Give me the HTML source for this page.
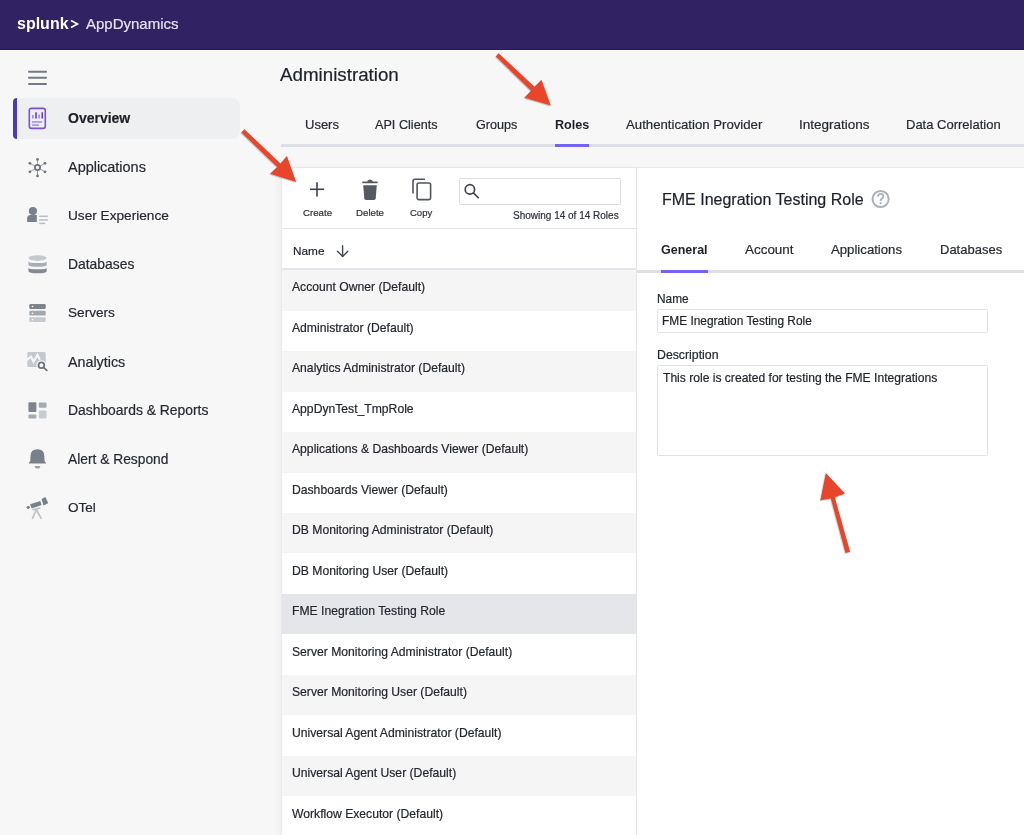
<!DOCTYPE html>
<html><head><meta charset="utf-8">
<style>
*{margin:0;padding:0;box-sizing:border-box}
html,body{width:1024px;height:835px;overflow:hidden;background:#f7f7f7;font-family:"Liberation Sans",sans-serif;position:relative}
.t{position:absolute;white-space:nowrap;line-height:1;will-change:transform;-webkit-text-stroke:0.2px currentColor}
.hdr{position:absolute;left:0;top:0;width:1024px;height:49.5px;background:#312263;border-bottom:1.5px solid #281a58}
.ovr{position:absolute;left:13px;top:97.8px;width:227px;height:41px;background:#eeeff1;border-radius:8px}
.ovbar{position:absolute;left:13px;top:97.8px;width:4.2px;height:41px;background:#4d3ab8;border-radius:8px 0 0 8px}
.side{color:#262a30;font-size:14.3px}
.tab{color:#262a30;font-size:13px}
.panelL{position:absolute;left:281px;top:167px;width:355.5px;height:668px;background:#fff;box-shadow:-3px 0 6px rgba(0,0,0,0.04);border-top:1px solid #e6e8eb;border-left:1px solid #e9eaed}
.panelR{position:absolute;left:636px;top:167px;width:388px;height:668px;background:#fff;border-left:1.2px solid #e3e5e9;border-top:1px solid #e6e8eb}
.row{position:absolute;left:282px;width:354px;height:40.45px}
.rt{color:#23272e;font-size:12.17px}
</style></head><body>
<div class="hdr"></div>
<div class="t" style="left:16.5px;top:15.7px;font-size:16px;font-weight:bold;color:#fff;-webkit-text-stroke:0">splunk</div>
<svg width="12" height="14" style="position:absolute;left:68px;top:17px" viewBox="68 17 12 14"><polyline points="71,20.6 77.4,24 71,27.4" fill="none" stroke="#fff" stroke-width="1.7"/></svg>
<div class="t" style="left:86.4px;top:16px;font-size:15px;color:#e6e2ef">AppDynamics</div>

<div class="ovr"></div><div class="ovbar"></div>
<div class="t side" style="left:68.2px;top:111px;font-weight:bold;font-size:14px;color:#1d2026">Overview</div>
<div class="t side" style="left:68.2px;top:160.3px;font-size:14.45px">Applications</div>
<div class="t side" style="left:68.2px;top:209.0px;font-size:13.65px">User Experience</div>
<div class="t side" style="left:68.2px;top:257.7px;font-size:13.9px">Databases</div>
<div class="t side" style="left:68.2px;top:306.4px;font-size:13.6px">Servers</div>
<div class="t side" style="left:68.2px;top:355.1px">Analytics</div>
<div class="t side" style="left:68.2px;top:403.8px;font-size:13.88px">Dashboards &amp; Reports</div>
<div class="t side" style="left:68.2px;top:452.5px;font-size:13.8px">Alert &amp; Respond</div>
<div class="t side" style="left:68.2px;top:501.2px;font-size:13.5px">OTel</div>

<div class="t" style="left:280.3px;top:65.8px;font-size:18.75px;color:#1d2129">Administration</div>
<div class="t tab" style="left:304.6px;top:117.7px">Users</div>
<div class="t tab" style="left:375.3px;top:119px;font-size:12.65px">API Clients</div>
<div class="t tab" style="left:476.1px;top:119px;font-size:12.6px">Groups</div>
<div class="t tab" style="left:555px;top:119px;font-size:12.63px;font-weight:bold;color:#1d2026;-webkit-text-stroke:0">Roles</div>
<div class="t tab" style="left:625.6px;top:117.7px;font-size:13.2px">Authentication Provider</div>
<div class="t tab" style="left:799.3px;top:117.7px;font-size:13.5px">Integrations</div>
<div class="t tab" style="left:905.8px;top:117.7px">Data Correlation</div>
<div style="position:absolute;left:281px;top:144px;width:743px;height:3px;background:#dcdfe3"></div>
<div style="position:absolute;left:555px;top:144px;width:34px;height:3px;background:#7264f0"></div>

<div class="panelL"></div>
<div class="panelR"></div>

<!-- list panel content -->
<div style="position:absolute;left:459px;top:178px;width:162px;height:26.7px;border:1px solid #dcdee2;border-radius:1.5px;background:#fff"></div>
<div class="t" style="left:302.6px;top:207.5px;font-size:9.7px;color:#2d3139">Create</div>
<div class="t" style="left:356.3px;top:207.5px;font-size:9.7px;color:#2d3139">Delete</div>
<div class="t" style="left:409.8px;top:207.5px;font-size:9.5px;color:#2d3139">Copy</div>
<div class="t" style="left:512.7px;top:211px;font-size:10px;color:#2d3139">Showing 14 of 14 Roles</div>
<div style="position:absolute;left:281.5px;top:228px;width:354.5px;height:1px;background:#e3e5e8"></div>
<div class="t" style="left:292.5px;top:245.8px;font-size:11.8px;color:#23272e">Name</div>
<div style="position:absolute;left:281.5px;top:268.4px;width:354.5px;height:2px;background:#e4e6e9"></div>
<div class="row" style="top:270.40px;background:#f5f5f5"></div>
<div class="t rt" style="left:292.2px;top:281.10px">Account Owner (Default)</div>
<div class="row" style="top:310.83px;background:#ffffff"></div>
<div class="t rt" style="left:292.2px;top:321.60px">Administrator (Default)</div>
<div class="row" style="top:351.26px;background:#f5f5f5"></div>
<div class="t rt" style="left:292.2px;top:362.10px">Analytics Administrator (Default)</div>
<div class="row" style="top:391.69px;background:#ffffff"></div>
<div class="t rt" style="left:292.2px;top:402.60px">AppDynTest_TmpRole</div>
<div class="row" style="top:432.12px;background:#f5f5f5"></div>
<div class="t rt" style="left:292.2px;top:443.10px">Applications &amp; Dashboards Viewer (Default)</div>
<div class="row" style="top:472.55px;background:#ffffff"></div>
<div class="t rt" style="left:292.2px;top:483.60px">Dashboards Viewer (Default)</div>
<div class="row" style="top:512.98px;background:#f5f5f5"></div>
<div class="t rt" style="left:292.2px;top:524.10px">DB Monitoring Administrator (Default)</div>
<div class="row" style="top:553.41px;background:#ffffff"></div>
<div class="t rt" style="left:292.2px;top:564.60px">DB Monitoring User (Default)</div>
<div class="row" style="top:593.84px;background:#e5e6e9"></div>
<div class="t rt" style="left:292.2px;top:605.10px">FME Inegration Testing Role</div>
<div class="row" style="top:634.27px;background:#ffffff"></div>
<div class="t rt" style="left:292.2px;top:645.60px">Server Monitoring Administrator (Default)</div>
<div class="row" style="top:674.70px;background:#f5f5f5"></div>
<div class="t rt" style="left:292.2px;top:686.10px">Server Monitoring User (Default)</div>
<div class="row" style="top:715.13px;background:#ffffff"></div>
<div class="t rt" style="left:292.2px;top:726.60px">Universal Agent Administrator (Default)</div>
<div class="row" style="top:755.56px;background:#f5f5f5"></div>
<div class="t rt" style="left:292.2px;top:767.10px">Universal Agent User (Default)</div>
<div class="row" style="top:795.99px;background:#ffffff"></div>
<div class="t rt" style="left:292.2px;top:807.60px">Workflow Executor (Default)</div>
<!-- right panel content -->
<div class="t" style="left:662.2px;top:191.6px;font-size:16px;color:#1d2129">FME Inegration Testing Role</div>
<div class="t tab" style="left:661.4px;top:244px;font-size:12.5px;font-weight:bold;color:#1d2026;-webkit-text-stroke:0">General</div>
<div class="t tab" style="left:745px;top:243.2px;font-size:13.45px">Account</div>
<div class="t tab" style="left:830.5px;top:243.2px;font-size:13.18px">Applications</div>
<div class="t tab" style="left:940px;top:243.2px">Databases</div>
<div style="position:absolute;left:637px;top:269.5px;width:387px;height:3px;background:#dcdfe3"></div>
<div style="position:absolute;left:661px;top:269.5px;width:47px;height:3px;background:#7264f0"></div>
<div class="t" style="left:657.2px;top:294px;font-size:11.85px;color:#23272e">Name</div>
<div style="position:absolute;left:657px;top:309px;width:330.5px;height:24px;border:1px solid #e0e2e6;border-radius:1.5px"></div>
<div class="t" style="left:662.4px;top:315.8px;font-size:11.9px;color:#1d2129">FME Inegration Testing Role</div>
<div class="t" style="left:657px;top:348.5px;font-size:12.3px;color:#23272e">Description</div>
<div style="position:absolute;left:657px;top:365px;width:330.5px;height:90.5px;border:1px solid #e0e2e6;border-radius:1.5px"></div>
<div class="t" style="left:662.7px;top:371.8px;font-size:12.1px;color:#1d2129">This role is created for testing the FME Integrations</div>


<svg width="1024" height="835" viewBox="0 0 1024 835" style="position:absolute;left:0;top:0">
<defs>
<filter id="sh" x="-20%" y="-20%" width="140%" height="140%"><feDropShadow dx="-0.6" dy="0.8" stdDeviation="0.7" flood-color="#2a4a4a" flood-opacity="0.35"/></filter>
</defs>
<!-- hamburger -->
<g stroke="#737a84" stroke-width="2" stroke-linecap="round">
<line x1="29" y1="71.7" x2="46" y2="71.7"/><line x1="29" y1="77.8" x2="46" y2="77.8"/><line x1="29" y1="83.9" x2="46" y2="83.9"/>
</g>
<!-- overview icon -->
<rect x="29.3" y="108.4" width="16" height="20" rx="2.2" fill="none" stroke="#7a4fdc" stroke-width="1.6"/>
<rect x="32" y="115" width="1.6" height="3.5" fill="#a688f0"/>
<rect x="35.2" y="112.3" width="1.6" height="6.2" fill="#6a3fd0"/>
<rect x="38.3" y="114.6" width="1.6" height="3.9" fill="#a688f0"/>
<rect x="41.4" y="112.3" width="1.6" height="6.2" fill="#6a3fd0"/>
<rect x="32" y="121.2" width="10.2" height="1.5" fill="#a688f0"/>
<rect x="32" y="124.4" width="7" height="1.5" fill="#a688f0"/>
<!-- applications icon -->
<g stroke="#9aa0a8" stroke-width="1">
<line x1="37.5" y1="167.5" x2="37.5" y2="159.4"/><line x1="37.5" y1="167.5" x2="37.5" y2="175.9"/>
<line x1="37.5" y1="167.5" x2="29.9" y2="163.3"/><line x1="37.5" y1="167.5" x2="45" y2="163.3"/>
<line x1="37.5" y1="167.5" x2="29.9" y2="171.8"/><line x1="37.5" y1="167.5" x2="45" y2="171.8"/>
</g>
<circle cx="37.5" cy="167.5" r="2.6" fill="#f7f7f7" stroke="#6f757e" stroke-width="1.8"/>
<g fill="#6f757e">
<circle cx="37.5" cy="159.4" r="1.4"/><circle cx="37.5" cy="175.9" r="1.4"/>
<circle cx="29.9" cy="163.3" r="1.4"/><circle cx="45" cy="163.3" r="1.4"/>
<circle cx="29.9" cy="171.8" r="1.4"/><circle cx="45" cy="171.8" r="1.4"/>
</g>
<!-- user experience icon -->
<circle cx="32.9" cy="211" r="4.1" fill="#7a818b"/>
<path d="M27.1 221.9 V218.5 Q27.1 215 30.5 215 H36.8 V221.9 Z" fill="#7a818b"/>
<g stroke="#b8bcc2" stroke-width="1.5">
<line x1="39.2" y1="216.3" x2="47.8" y2="216.3"/><line x1="39.2" y1="220" x2="47.8" y2="220"/><line x1="39.2" y1="223.4" x2="45.2" y2="223.4"/>
</g>
<!-- databases icon -->
<path d="M28.4 267.8 V271 Q28.4 273.3 37.5 273.3 Q46.7 273.3 46.7 271 V267.8 Q46.7 269.3 37.5 269.3 Q28.4 269.3 28.4 267.8 Z" fill="#858a92"/>
<path d="M28.4 261.4 V264.7 Q28.4 266.7 37.5 266.7 Q46.7 266.7 46.7 264.7 V261.4 Q46.7 263 37.5 263 Q28.4 263 28.4 261.4 Z" fill="#a9adb3"/>
<ellipse cx="37.5" cy="258.1" rx="9.15" ry="2.8" fill="#c5c8cc"/>
<!-- servers icon -->
<rect x="29.3" y="304.1" width="16.4" height="4.8" rx="1.2" fill="#7e848c"/>
<rect x="29.3" y="310.8" width="16.4" height="4.8" rx="1.2" fill="#a3a8ae"/>
<rect x="29.3" y="317.3" width="16.4" height="4.6" rx="1.2" fill="#c6c9cd"/>
<g fill="#fff"><circle cx="32.5" cy="306.5" r="0.8"/><circle cx="32.5" cy="313.2" r="0.8"/><circle cx="32.5" cy="319.6" r="0.8"/></g>
<!-- analytics icon -->
<rect x="27.3" y="352.1" width="18.4" height="14.8" rx="1.5" fill="#c5c8cd"/>
<polyline points="26.8,359.8 31,356.6 33.6,361.8 37.5,354.7 39.9,359.8" fill="none" stroke="#f7f7f7" stroke-width="2.1"/>
<circle cx="41.4" cy="365.2" r="5" fill="#f7f7f7"/>
<circle cx="41.4" cy="365.2" r="2.9" fill="none" stroke="#6f757e" stroke-width="1.8"/>
<line x1="43.5" y1="367.4" x2="46.8" y2="370.4" stroke="#6f757e" stroke-width="1.8" stroke-linecap="round"/>
<!-- dashboards icon -->
<rect x="28.4" y="402.2" width="8" height="9.9" rx="1" fill="#7e848c"/>
<rect x="38.8" y="402.4" width="7.7" height="5.4" rx="1" fill="#a5aab0"/>
<rect x="28.4" y="414.5" width="8" height="3.9" rx="1" fill="#a5aab0"/>
<rect x="38.8" y="410.6" width="7.7" height="7.8" rx="1" fill="#c8cbcf"/>
<!-- alert icon -->
<path d="M30.4 460 V456.5 Q30.4 449.3 37.4 449.3 Q44.4 449.3 44.4 456.5 V460 Q44.6 461.6 45.8 462.4 Q46.5 463.6 45.3 463.6 H29.6 Q28.4 463.6 29.1 462.4 Q30.2 461.6 30.4 460 Z" fill="#7a8089"/>
<path d="M34.7 465.9 H40.3 Q40.3 468.5 37.5 468.5 Q34.7 468.5 34.7 465.9 Z" fill="#9ea3aa"/>
<!-- otel icon -->
<g stroke="#c0c4c9" stroke-width="1.8" stroke-linecap="round">
<line x1="33.2" y1="509.7" x2="39.8" y2="508.2"/><line x1="36.4" y1="509.5" x2="32.6" y2="518.2"/><line x1="36.4" y1="509.5" x2="41" y2="518.2"/>
</g>
<path d="M30.1 504.3 L40.3 501.1 L41.6 505 L31.6 508.4 Z" fill="#7a8089"/>
<path d="M41.6 499.1 L45.4 497 L48.2 503.2 L43.5 505.4 Z" fill="#7a8089"/>
<circle cx="28.2" cy="507.3" r="1.6" fill="#7a8089"/>
<!-- toolbar icons -->
<g stroke="#3d424a" stroke-width="1.6">
<line x1="310" y1="189.3" x2="324.2" y2="189.3"/><line x1="317" y1="182.3" x2="317" y2="196.6"/>
</g>
<line x1="363" y1="182.3" x2="377" y2="182.3" stroke="#565a61" stroke-width="1.7" stroke-linecap="round"/>
<path d="M367 182 Q367.4 179.4 370 179.4 Q372.6 179.4 373 182 Z" fill="#565a61"/>
<path d="M363.2 185.3 H376.8 L375.7 198.6 Q375.5 199.9 374 199.9 H366 Q364.5 199.9 364.3 198.6 Z" fill="#565a61"/>
<path d="M413 193.5 V181 Q413 179.3 414.7 179.3 H425" fill="none" stroke="#50555d" stroke-width="1.6"/>
<rect x="417.1" y="183" width="13.5" height="16.6" rx="1.6" fill="none" stroke="#50555d" stroke-width="1.6"/>
<!-- search icon -->
<circle cx="469.9" cy="189.4" r="4.7" fill="none" stroke="#44484f" stroke-width="1.7"/>
<line x1="473.4" y1="192.9" x2="478.2" y2="197.6" stroke="#44484f" stroke-width="1.7" stroke-linecap="round"/>
<!-- sort arrow -->
<g fill="none" stroke="#44484f" stroke-width="1.4" stroke-linecap="round" stroke-linejoin="round">
<line x1="342.6" y1="245.8" x2="342.6" y2="256.2"/><polyline points="337.4,251.2 342.6,256.4 347.8,251.2"/>
</g>
<!-- help icon -->
<circle cx="880.6" cy="199" r="8.1" fill="none" stroke="#acb1b9" stroke-width="2"/>
<path d="M877.9 196.6 Q878 193.9 880.7 193.9 Q883.3 193.9 883.3 196.3 Q883.3 197.8 881.9 198.6 Q880.6 199.4 880.6 201" fill="none" stroke="#acb1b9" stroke-width="1.8"/>
<circle cx="880.6" cy="203.2" r="1.1" fill="#acb1b9"/>
<!-- arrows -->
<g fill="#e8442a" filter="url(#sh)">
<path d="M495.8 56.4 L498.6 53.3 L534.5 86.7 L541.5 79.7 L550.8 105.6 L524.4 97.7 L531 90.7 Z"/>
<path d="M241.3 132.6 L244.4 129.2 L280.5 163.5 L286.9 156.1 L296.2 182.1 L270.1 173.7 L277.2 167 Z"/>
<path d="M845.5 552.9 L850.1 551.7 L834.8 497.3 L845 493.6 L825.8 472.9 L820.4 500.2 L830.8 498.4 Z"/>
</g>
</svg>

</body></html>
